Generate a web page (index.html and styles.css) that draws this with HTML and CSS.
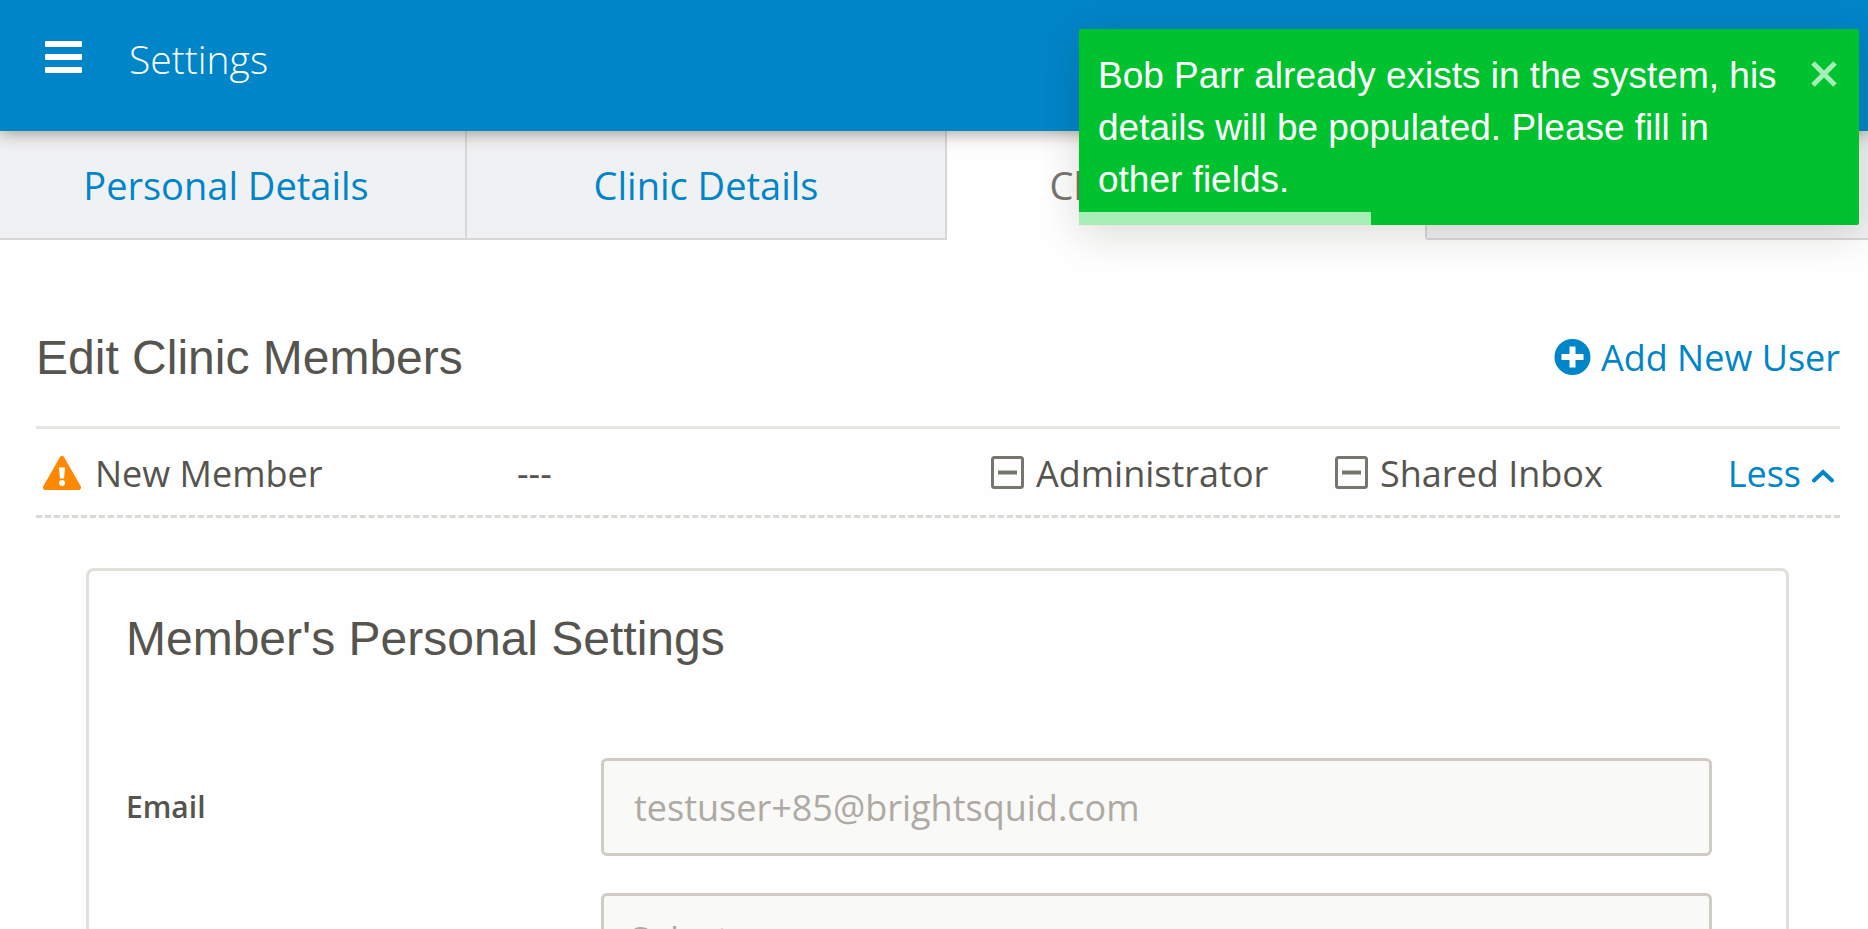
FILE: index.html
```html
<!DOCTYPE html>
<html lang="en">
<head>
    <meta charset="UTF-8">
    <meta name="viewport" content="width=device-width, initial-scale=1.0">
    <title>Settings</title>
    <link rel="stylesheet" href="styles.css">
</head>
<body>
    <header class="topbar">
        <button class="menu-button" type="button" aria-label="Menu">
            <svg width="38" height="36" viewBox="0 0 38 36" fill="#fff">
                <rect x="0" y="0" width="37" height="6" rx="1"/>
                <rect x="0" y="13" width="37" height="6" rx="1"/>
                <rect x="0" y="26" width="37" height="6" rx="1"/>
            </svg>
        </button>
        <h1 class="topbar-title">Settings</h1>
    </header>

    <nav class="tabs">
        <a class="tab" href="#personal">Personal Details</a>
        <a class="tab" href="#clinic">Clinic Details</a>
        <a class="tab active" href="#members">Clinic Members</a>
        <a class="tab" href="#billing"></a>
    </nav>

    <main class="content">
        <div class="section-head">
            <h2 class="heading">Edit Clinic Members</h2>
            <a class="add-user" href="#add">
                <svg width="38" height="38" viewBox="0 0 38 38">
                    <circle cx="18.500" cy="18" r="18" fill="#0085c8"/>
                    <path d="M18.500 7.500v21M7.500 18h22" stroke="#fff" stroke-width="6"/>
                </svg>
                Add New User
            </a>
        </div>

        <div class="member-row">
            <span class="member-name">
                <svg width="38" height="36" viewBox="0 0 38 36">
                    <path d="M19 2.500 35.500 31.500H2.500Z" fill="#ff8800" stroke="#ff8800" stroke-width="5" stroke-linejoin="round"/>
                    <path d="M16 11.500h6l-1 11h-4z" fill="#fff"/>
                    <circle cx="19" cy="27" r="3" fill="#fff"/>
                </svg>
                New Member
            </span>
            <span class="member-role">---</span>
            <span class="member-flag">
                <svg width="34" height="36" viewBox="0 0 34 36" fill="none" stroke="#77756e">
                    <rect x="1.500" y="1.500" width="30" height="30" rx="2" stroke-width="3"/>
                    <path d="M7 16.500h19" stroke-width="4"/>
                </svg>
                Administrator
            </span>
            <span class="member-flag">
                <svg width="34" height="36" viewBox="0 0 34 36" fill="none" stroke="#77756e">
                    <rect x="1.500" y="1.500" width="30" height="30" rx="2" stroke-width="3"/>
                    <path d="M7 16.500h19" stroke-width="4"/>
                </svg>
                Shared Inbox
            </span>
            <a class="member-toggle" href="#less">
                Less
                <svg width="22" height="20" viewBox="0 0 22 20" fill="none" stroke="#0085c8" stroke-width="4" stroke-linecap="round">
                    <path d="M2 16.500 11 8l9 8.500"/>
                </svg>
            </a>
        </div>

        <section class="panel">
            <h2 class="heading">Member's Personal Settings</h2>
            <form class="fields">
                <div class="field">
                    <label for="email">Email</label>
                    <input type="text" id="email" value="testuser+85@brightsquid.com" disabled>
                </div>
                <div class="field">
                    <label for="salutation"></label>
                    <select id="salutation" disabled>
                        <option>Select</option>
                    </select>
                </div>
            </form>
        </section>
    </main>

    <div class="toast" role="alert">
        <p class="toast-text">Bob Parr already exists in the system, his details will be populated. Please fill in other fields.</p>
        <button class="toast-close" type="button" aria-label="Close">
            <svg width="28" height="28" viewBox="0 0 28 28" fill="none" stroke="currentColor" stroke-width="5">
                <path d="M2 2l22 22M24 2 2 24"/>
            </svg>
        </button>
        <div class="toast-progress"></div>
    </div>
</body>
</html>
```
FILE: styles.css
```css
* {
    box-sizing: border-box;
}

body {
    margin: 0;
    height: 100vh;
    overflow: hidden;
    background-color: #fefefe;
    color: #55544e;
    font-family: "Open Sans", "Noto Sans", sans-serif;
    font-size: 36px;
    line-height: 48px;
}

a {
    color: #0085c8;
    text-decoration: none;
}

svg {
    flex: none;
    display: block;
}

.topbar {
    position: relative;
    z-index: 1;
    display: flex;
    align-items: center;
    gap: 46px;
    height: 131px;
    padding: 0 45px 14px;
    background-color: #0085c8;
    box-shadow: 0 2px 16px rgba(70, 60, 40, 0.5);
}

.menu-button {
    padding: 0;
    border: 0;
    background: none;
}

.topbar-title {
    margin: 0;
    color: #fff;
    font-size: 39px;
    font-weight: 300;
}

/* the strip runs a little past both edges of the window */
.tabs {
    display: grid;
    grid-template-columns: repeat(4, 1fr);
    height: 109px;
    margin: 0 -39px 0 -13px;
}

.tab {
    padding-top: 30px;
    border-right: 2px solid #d9d7d6;
    border-bottom: 2px solid #d9d7d6;
    background-color: #f0f1f3;
    font-size: 38px;
    text-align: center;
}

.tab.active {
    border-bottom-color: transparent;
    background-color: #fefefe;
    color: #77756e;
}

.content {
    padding: 82px 28px 0 36px;
}

.heading {
    margin: 0;
    font-family: "Liberation Sans", Arial, sans-serif;
    font-size: 48px;
    font-weight: 400;
    line-height: 72px;
}

.section-head {
    display: flex;
    align-items: center;
    justify-content: space-between;
    height: 107px;
    padding-bottom: 32px;
    border-bottom: 3px solid #e5e5e1;
}

.add-user {
    display: flex;
    align-items: center;
    gap: 9px;
}

.member-row {
    display: grid;
    grid-template-columns: 474px 474px 344px 1fr auto;
    align-items: center;
    height: 89px;
    padding: 4px 6px 0 7px;
    border-bottom: 3px dashed #dcd9d4;
}

.member-name,
.member-flag,
.member-toggle {
    display: flex;
    align-items: center;
    gap: 14px;
}

.member-flag,
.member-toggle {
    gap: 11px;
}

.panel {
    margin: 50px 51px 0 50px;
    padding: 32px 74px 60px 37px;
    border: 3px solid #e0dfd9;
    border-radius: 8px;
}

.fields {
    display: grid;
    gap: 37px;
    margin-top: 83px;
}

.field {
    display: grid;
    grid-template-columns: 475px 1fr;
    align-items: center;
}

.field label {
    font-size: 30px;
    font-weight: 600;
}

.field input,
.field select {
    width: 100%;
    height: 98px;
    padding: 0 30px;
    border: 3px solid #d0ccc5;
    border-radius: 6px;
    background-color: #f9f9f7;
    color: #aeaaa3;
    font: inherit;
    opacity: 1;
    appearance: none;
}

.field select {
    padding: 0 26px 4px;
}

.toast {
    position: absolute;
    z-index: 2;
    top: 29px;
    right: 9px;
    display: flex;
    align-items: flex-start;
    gap: 20px;
    width: 780px;
    height: 196px;
    padding: 21px 20px 0 19px;
    border-radius: 2px;
    background-color: #00c22f;
    box-shadow: 0 8px 40px rgba(40, 30, 10, 0.16);
    color: #fff;
    font-family: "Liberation Sans", Arial, sans-serif;
    font-size: 37px;
    line-height: 52px;
}

.toast-text {
    flex: 1;
    margin: 0;
}

.toast-close {
    padding: 11px 0 0;
    border: 0;
    background: none;
    color: #a5efb6;
}

.toast-progress {
    position: absolute;
    left: 0;
    bottom: 0;
    width: 292px;
    height: 13px;
    background-color: #a5eeb6;
}
```
